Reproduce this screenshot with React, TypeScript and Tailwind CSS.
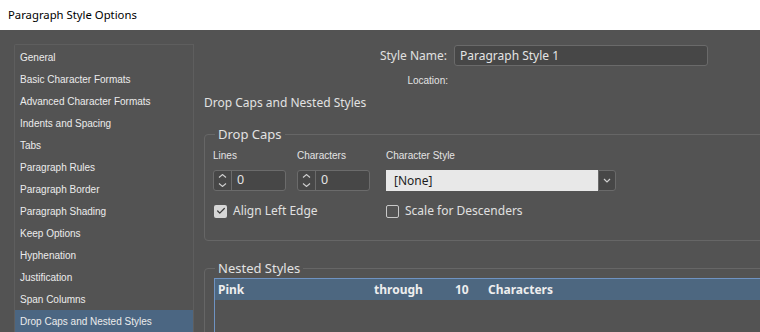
import { Check } from 'lucide-react';

const navItems = [
  'General',
  'Basic Character Formats',
  'Advanced Character Formats',
  'Indents and Spacing',
  'Tabs',
  'Paragraph Rules',
  'Paragraph Border',
  'Paragraph Shading',
  'Keep Options',
  'Hyphenation',
  'Justification',
  'Span Columns',
  'Drop Caps and Nested Styles',
];

const ui = { fontFamily: '"Noto Sans", "Open Sans", sans-serif' };
const small = { fontFamily: '"Liberation Sans", Arial, sans-serif' };

function Spinner({ value }: { value: string }) {
  return (
    <div className="flex h-[21px] w-[73px] rounded-[3px] border border-[#6b6b6b] bg-[#474747]">
      <div className="flex w-[18px] flex-col items-center justify-center gap-[5px] border-r border-[#6b6b6b]">
        <svg width="9" height="4" viewBox="0 0 9 4" fill="none" stroke="#cfcfcf" strokeWidth="1.1">
          <path d="M1 3.5 L4.5 0.5 L8 3.5" />
        </svg>
        <svg width="9" height="4" viewBox="0 0 9 4" fill="none" stroke="#cfcfcf" strokeWidth="1.1">
          <path d="M1 0.5 L4.5 3.5 L8 0.5" />
        </svg>
      </div>
      <div className="flex items-center pl-[5px] text-[12.5px] text-[#e4e4e4]" style={ui}>
        {value}
      </div>
    </div>
  );
}

function Checkbox({ checked, label }: { checked?: boolean; label: string }) {
  return (
    <div className="flex items-center gap-[6px]">
      {checked ? (
        <div className="flex h-[13px] w-[13px] items-center justify-center rounded-[2px] bg-[#d6d6d6]">
          <Check className="h-[10px] w-[10px] text-[#3a3a3a]" strokeWidth={3} />
        </div>
      ) : (
        <div className="h-[13px] w-[13px] rounded-[2px] border border-[#c8c8c8]" />
      )}
      <span className="text-[12px] text-[#e0e0e0]" style={ui}>
        {label}
      </span>
    </div>
  );
}

export default function App() {
  return (
    <div className="flex h-[332px] w-[760px] flex-col overflow-hidden bg-[#535353]">
      <div className="flex h-[30px] shrink-0 items-center bg-white pl-[8px] text-[11.3px] text-black" style={ui}>
        Paragraph Style Options
      </div>

      <div className="flex flex-1 overflow-hidden pl-[14px] pt-[14px]">
        <div className="w-[180px] shrink-0 rounded-tl-[2px] border-l border-t border-r border-[#5e5e5e] bg-[#535353] pt-[1px]">
          {navItems.map((item, i) => (
            <div
              key={i}
              className={
                'flex h-[22px] items-center pl-[5px] text-[10px] text-[#ececec] ' +
                (i === navItems.length - 1 ? 'bg-[#4b6682]' : '')
              }
              style={small}
            >
              {item}
            </div>
          ))}
        </div>

        <div className="ml-[10px] flex min-w-0 flex-1 flex-col">
          <div className="flex items-center pt-[1px]">
            <div className="w-[243px] text-right text-[12px] text-[#e0e0e0]" style={ui}>
              Style Name:
            </div>
            <div
              className="ml-[7px] flex h-[21px] w-[254px] items-center rounded-[3px] border border-[#6a6a6a] bg-[#474747] pl-[5px] text-[12px] text-[#e4e4e4]"
              style={ui}
            >
              Paragraph Style 1
            </div>
          </div>
          <div className="mt-[7px] w-[244px] text-right text-[10px] text-[#e4e4e4]" style={small}>
            Location:
          </div>

          <div className="mt-[6px] text-[12px] text-[#e2e2e2]" style={ui}>
            Drop Caps and Nested Styles
          </div>
          <div className="mt-[6px] h-px w-[600px] bg-[#5f5f5f]" />

          <fieldset className="mt-[8px] h-[115px] w-[600px] shrink-0 rounded-[4px] border border-[#666666] pl-[8px]">
            <legend className="ml-[2px] px-[3px] text-[13px] leading-[17px] text-[#e2e2e2]" style={ui}>
              Drop Caps
            </legend>
            <div className="mt-[5px] flex gap-[11px] text-[10px] text-[#e4e4e4]" style={small}>
              <div className="flex w-[73px] flex-col gap-[7px]">
                <span>Lines</span>
                <Spinner value="0" />
              </div>
              <div className="flex w-[73px] flex-col gap-[7px]">
                <span>Characters</span>
                <Spinner value="0" />
              </div>
              <div className="ml-[5px] flex w-[230px] flex-col gap-[7px]">
                <span>Character Style</span>
                <div className="flex h-[21px]">
                  <div
                    className="flex flex-1 items-center bg-[#e8e8e8] pl-[8px] text-[12px] text-[#1e1e1e]"
                    style={ui}
                  >
                    [None]
                  </div>
                  <div className="flex w-[18px] items-center justify-center rounded-r-[3px] border border-[#6a6a6a] bg-[#474747]">
                    <svg width="8" height="5" viewBox="0 0 8 5" fill="none" stroke="#cfcfcf" strokeWidth="1.2">
                      <path d="M1 1 L4 4 L7 1" />
                    </svg>
                  </div>
                </div>
              </div>
            </div>
            <div className="mt-[11px] flex">
              <div className="w-[173px] pl-[1px]">
                <Checkbox checked label="Align Left Edge" />
              </div>
              <Checkbox label="Scale for Descenders" />
            </div>
          </fieldset>

          <fieldset className="mt-[19px] h-[80px] w-[600px] shrink-0 rounded-[4px] border border-[#666666] pl-[9px]">
            <legend className="ml-[1px] px-[3px] text-[13px] leading-[17px] text-[#e2e2e2]" style={ui}>
              Nested Styles
            </legend>
            <div className="mt-[1px] h-[70px] border-l border-t border-[#6f93c2]">
              <div
                className="flex h-[21px] items-center bg-[#4d6780] text-[12px] font-bold text-[#eeeeee]"
                style={ui}
              >
                <span className="w-[159px] pl-[3px]">Pink</span>
                <span className="w-[81px]">through</span>
                <span className="w-[33px]">10</span>
                <span>Characters</span>
              </div>
            </div>
          </fieldset>
        </div>
      </div>
    </div>
  );
}
